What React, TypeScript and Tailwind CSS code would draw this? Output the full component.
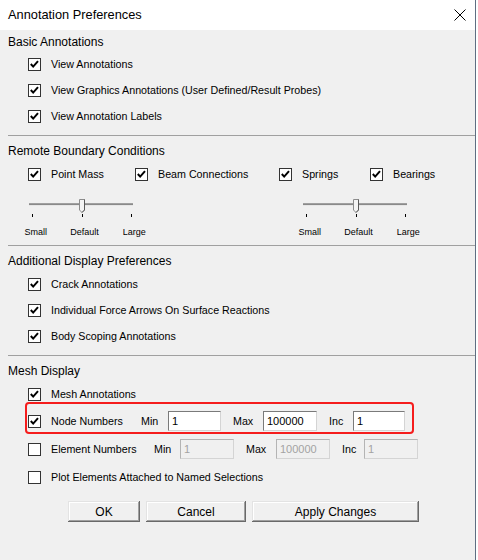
import React from "react";

function Box({ checked }: { checked: boolean }) {
  return (
    <span className="w-[13px] h-[13px] border border-[#333333] bg-white flex items-center justify-center shrink-0">
      {checked && (
        <svg width="11" height="11" viewBox="0 0 11 11">
          <path d="M1.8 5 L4.2 7.6 L9 2.2" fill="none" stroke="#000" strokeWidth="2" />
        </svg>
      )}
    </span>
  );
}

function Check({ label, checked = true, className = "" }: { label: string; checked?: boolean; className?: string }) {
  return (
    <div className={`h-[16px] flex items-center gap-[10px] ${className}`}>
      <Box checked={checked} />
      <span className="text-[10.7px] leading-none whitespace-nowrap">{label}</span>
    </div>
  );
}

function Header({ children, className = "" }: { children: React.ReactNode; className?: string }) {
  return <div className={`h-[20px] flex items-center pl-[8px] text-[12px] ${className}`}>{children}</div>;
}

function Sep({ className = "" }: { className?: string }) {
  return <div className={`ml-[8px] h-[1px] bg-[#a0a0a0] ${className}`} />;
}

function Slider({ className = "" }: { className?: string }) {
  return (
    <div className={`w-[150px] flex flex-col ${className}`}>
      <svg width="110" height="22" viewBox="0 0 110 22" className="ml-[20px]">
        <rect x="0" y="7" width="104" height="1" fill="#a0a0a0" />
        <rect x="0" y="8" width="104" height="1" fill="#8a8a8a" />
        <rect x="0" y="9" width="104" height="1" fill="#e6e6e6" />
        <path d="M50.5 3.5 H55.5 V14 L53 16.5 L50.5 14 Z" fill="#f4f4f4" stroke="#8c8c8c" strokeWidth="1" />
        <path d="M55.5 3.5 V14 L53 16.5" fill="none" stroke="#5a5a5a" strokeWidth="1" />
        <rect x="3" y="18" width="1" height="3" fill="#000" />
        <rect x="53" y="18" width="1" height="3" fill="#000" />
        <rect x="102" y="18" width="1" height="3" fill="#000" />
      </svg>
      <div className="mt-[8px] h-[12px] flex items-center text-[9px] leading-none">
        <span className="w-[50px] text-center ml-[2px]">Small</span>
        <span className="w-[50px] text-center ml-[-1px]">Default</span>
        <span className="w-[50px] text-center">Large</span>
      </div>
    </div>
  );
}

function Field({ value, w, disabled = false }: { value: string; w: string; disabled?: boolean }) {
  return (
    <div
      className={`${w} h-[20px] flex items-center pl-[3px] text-[11px] border-t border-l border-[#7a7a7a] border-r-[#d4d4d4] border-b-[#d4d4d4] border-r border-b ${
        disabled ? "bg-[#f0f0f0] text-[#a3a3a3] border-t-[#b4b4b4] border-l-[#b4b4b4]" : "bg-white text-black"
      }`}
    >
      {value}
    </div>
  );
}

function Button({ label, w }: { label: string; w: string }) {
  return (
    <div
      className={`${w} h-[21px] flex items-center justify-center text-[12px] bg-[#f0f0f0] shadow-[inset_-1px_-1px_#696969,inset_1px_1px_#e3e3e3,inset_-2px_-2px_#a0a0a0,inset_2px_2px_#ffffff]`}
    >
      {label}
    </div>
  );
}

export default function App() {
  return (
    <div className="w-[478px] h-[560px] bg-white font-['Liberation_Sans',Arial,sans-serif] text-black">
      <div className="w-[476px] h-[560px] border-r border-[#5f6f82] flex flex-col">
        {/* title bar */}
        <div className="h-[30px] shrink-0 bg-white flex items-center justify-between pl-[8px] pr-[9px]">
          <span className="text-[12.8px]">Annotation Preferences</span>
          <svg width="12" height="12" viewBox="0 0 12 12">
            <path d="M0.5 0.5 L11.5 11.5 M11.5 0.5 L0.5 11.5" stroke="#000" strokeWidth="1" />
          </svg>
        </div>

        <div className="flex-1 bg-[#f0f0f0] flex flex-col">
          {/* Basic Annotations */}
          <Header className="mt-[2px]">Basic Annotations</Header>
          <div className="mt-[4px] flex flex-col gap-[10px] pl-[28px]">
            <Check label="View Annotations" />
            <Check label="View Graphics Annotations (User Defined/Result Probes)" />
            <Check label="View Annotation Labels" />
          </div>
          <Sep className="mt-[11px]" />

          {/* Remote Boundary Conditions */}
          <Header className="mt-[5px]">Remote Boundary Conditions</Header>
          <div className="mt-[5px] flex pl-[28px]">
            <Check label="Point Mass" className="w-[107px]" />
            <Check label="Beam Connections" className="w-[144px]" />
            <Check label="Springs" className="w-[91px]" />
            <Check label="Bearings" />
          </div>
          <div className="mt-[14px] flex">
            <Slider className="ml-[9px]" />
            <Slider className="ml-[124px]" />
          </div>
          <Sep className="mt-[7px]" />

          {/* Additional Display Preferences */}
          <Header className="mt-[5px]">Additional Display Preferences</Header>
          <div className="mt-[5px] flex flex-col gap-[10px] pl-[28px]">
            <Check label="Crack Annotations" />
            <Check label="Individual Force Arrows On Surface Reactions" />
            <Check label="Body Scoping Annotations" />
          </div>
          <Sep className="mt-[11px]" />

          {/* Mesh Display */}
          <Header className="mt-[5px]">Mesh Display</Header>
          <div className="mt-[5px] flex flex-col pl-[28px]">
            <Check label="Mesh Annotations" />

            <div className="relative mt-[9px] h-[20px] flex items-center text-[10.7px]">
              <Box checked />
              <span className="ml-[10px] w-[90px]">Node Numbers</span>
              <span className="w-[27px]">Min</span>
              <Field value="1" w="w-[53px]" />
              <span className="ml-[12px] w-[30px]">Max</span>
              <Field value="100000" w="w-[54px]" />
              <span className="ml-[12px] w-[24px]">Inc</span>
              <Field value="1" w="w-[52px]" />
              <div className="absolute left-[-3px] top-[-9px] w-[389px] h-[32px] border-2 border-[#f51d1d] rounded-[4px] pointer-events-none" />
            </div>

            <div className="mt-[8px] h-[20px] flex items-center text-[10.7px]">
              <Box checked={false} />
              <span className="ml-[10px] w-[103px]">Element Numbers</span>
              <span className="w-[26px]">Min</span>
              <Field value="1" w="w-[54px]" disabled />
              <span className="ml-[12px] w-[30px]">Max</span>
              <Field value="100000" w="w-[54px]" disabled />
              <span className="ml-[12px] w-[22px]">Inc</span>
              <Field value="1" w="w-[54px]" disabled />
            </div>

            <Check label="Plot Elements Attached to Named Selections" checked={false} className="mt-[10px]" />
          </div>

          <div className="mt-[16px] flex gap-[6px] pl-[68px]">
            <Button label="OK" w="w-[72px]" />
            <Button label="Cancel" w="w-[100px]" />
            <Button label="Apply Changes" w="w-[167px]" />
          </div>
        </div>
      </div>
    </div>
  );
}
